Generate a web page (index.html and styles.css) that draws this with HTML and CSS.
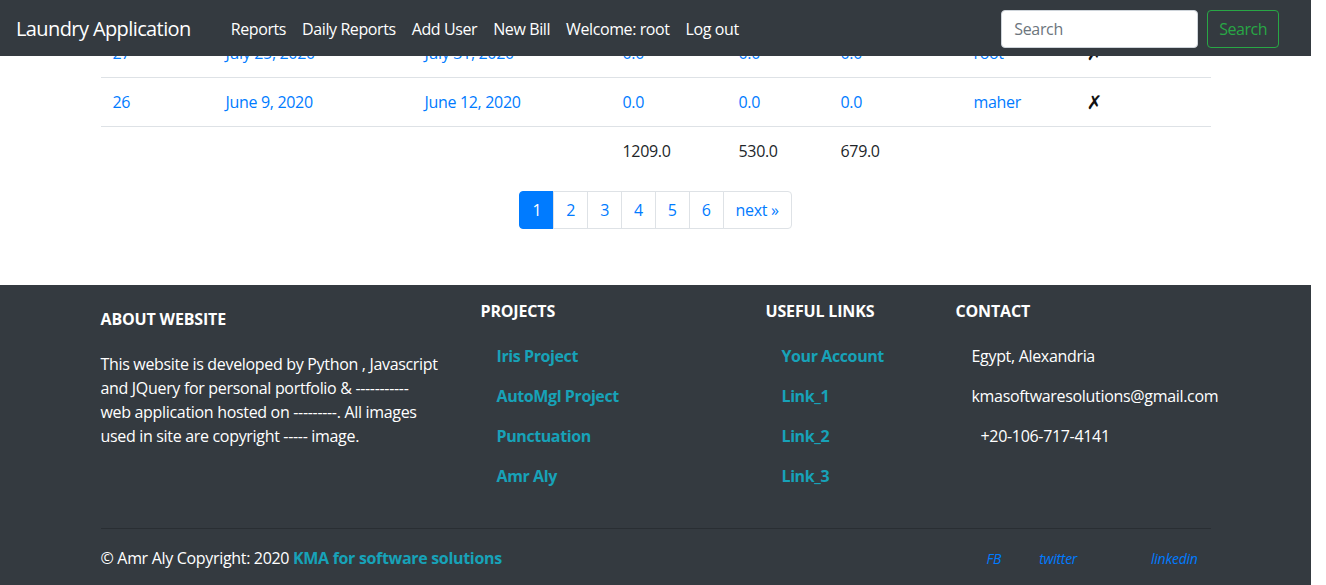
FILE: index.html
```html
<!DOCTYPE html>
<html lang="en">
<head>
<meta charset="utf-8">
<title>Laundry Application</title>
<link rel="stylesheet" href="styles.css">
</head>
<body>
<div class="page">
  <nav class="navbar">
    <a class="brand" href="#">Laundry Application</a>
    <ul class="nav-links">
      <li><a href="#">Reports</a></li>
      <li><a href="#">Daily Reports</a></li>
      <li><a href="#">Add User</a></li>
      <li><a href="#">New Bill</a></li>
      <li><a href="#">Welcome: root</a></li>
      <li><a href="#">Log out</a></li>
    </ul>
    <form class="search">
      <input type="search" placeholder="Search">
      <button type="button">Search</button>
    </form>
  </nav>

  <main class="main">
    <table class="table">
      <colgroup>
        <col class="c-id"><col class="c-from"><col class="c-to"><col class="c-total">
        <col class="c-paid"><col class="c-rest"><col class="c-user"><col class="c-del">
      </colgroup>
      <tbody>
        <tr>
          <td><a href="#">27</a></td>
          <td><a href="#">July 25, 2020</a></td>
          <td><a href="#">July 31, 2020</a></td>
          <td><a href="#">0.0</a></td>
          <td><a href="#">0.0</a></td>
          <td><a href="#">0.0</a></td>
          <td><a href="#">root</a></td>
          <td class="del">✗</td>
        </tr>
        <tr>
          <td><a href="#">26</a></td>
          <td><a href="#">June 9, 2020</a></td>
          <td><a href="#">June 12, 2020</a></td>
          <td><a href="#">0.0</a></td>
          <td><a href="#">0.0</a></td>
          <td><a href="#">0.0</a></td>
          <td><a href="#">maher</a></td>
          <td class="del">✗</td>
        </tr>
        <tr>
          <td></td><td></td><td></td>
          <td>1209.0</td>
          <td>530.0</td>
          <td>679.0</td>
          <td></td><td></td>
        </tr>
      </tbody>
    </table>

    <ul class="pagination">
      <li class="page-item active"><a class="page-link" href="#">1</a></li>
      <li class="page-item"><a class="page-link" href="#">2</a></li>
      <li class="page-item"><a class="page-link" href="#">3</a></li>
      <li class="page-item"><a class="page-link" href="#">4</a></li>
      <li class="page-item"><a class="page-link" href="#">5</a></li>
      <li class="page-item"><a class="page-link" href="#">6</a></li>
      <li class="page-item"><a class="page-link" href="#">next »</a></li>
    </ul>
  </main>

  <footer class="footer">
    <div class="footer-inner">
      <div class="footer-grid">
        <div class="about">
          <h6>About Website</h6>
          <p>This website is developed by Python , Javascript<br>and JQuery for personal portfolio &amp; -----------<br>web application hosted on ---------. All images<br>used in site are copyright ----- image.</p>
        </div>
        <div>
          <h6>Projects</h6>
          <ul class="links">
            <li><a href="#">Iris Project</a></li>
            <li><a href="#">AutoMgl Project</a></li>
            <li><a href="#">Punctuation</a></li>
            <li><a href="#">Amr Aly</a></li>
          </ul>
        </div>
        <div>
          <h6>Useful Links</h6>
          <ul class="links">
            <li><a href="#">Your Account</a></li>
            <li><a href="#">Link_1</a></li>
            <li><a href="#">Link_2</a></li>
            <li><a href="#">Link_3</a></li>
          </ul>
        </div>
        <div>
          <h6>Contact</h6>
          <ul class="links contact">
            <li>Egypt, Alexandria</li>
            <li>kmasoftwaresolutions@gmail.com</li>
            <li class="phone">+20-106-717-4141</li>
          </ul>
        </div>
      </div>
      <hr class="rule">
      <div class="bottom">
        <p class="copy">© Amr Aly Copyright: 2020 <a href="#">KMA for software solutions</a></p>
        <div class="social">
          <a class="fb" href="#">FB</a>
          <a class="tw" href="#">twitter</a>
          <a class="li" href="#">linkedin</a>
        </div>
      </div>
    </div>
  </footer>
</div>
</body>
</html>
```

FILE: styles.css
```css
html {
  overflow: hidden;
}

body {
  margin: 0;
  font-family: "Open Sans", "Noto Sans", sans-serif;
  font-size: 16px;
  line-height: 24px;
  color: #212529;
  background: #fff;
  letter-spacing: -0.02em;
}

a {
  color: #007bff;
  text-decoration: none;
}

.page {
  width: calc(100% - 15px);
}

/* Navbar (fixed on top of the scrolled content) */
.navbar {
  position: fixed;
  top: 0;
  left: 0;
  right: 15px;
  height: 56px;
  box-sizing: border-box;
  padding: 1px 32px 0 16px;
  background: #343a40;
  display: flex;
  align-items: center;
  z-index: 10;
}

.brand {
  color: #fff;
  font-size: 20px;
  line-height: 30px;
  letter-spacing: -0.03em;
  margin-right: 32px;
}

.nav-links {
  display: flex;
  flex: 1;
  list-style: none;
  margin: 0;
  padding: 0;
}

.nav-links a {
  display: block;
  padding: 8px;
  color: #fff;
  line-height: 24px;
  letter-spacing: -0.025em;
}

.search {
  display: flex;
  gap: 9px;
  margin: 0;
}

.search input {
  width: 197px;
  height: 38px;
  box-sizing: border-box;
  padding: 6px 12px;
  font: inherit;
  letter-spacing: inherit;
  color: #495057;
  background: #fff;
  border: 1px solid #ced4da;
  border-radius: 4px;
  outline: none;
}

.search input::placeholder {
  color: #6c757d;
}

.search button {
  height: 38px;
  box-sizing: border-box;
  padding: 6px 11px;
  font: inherit;
  letter-spacing: -0.03em;
  color: #28a745;
  background: transparent;
  border: 1px solid #28a745;
  border-radius: 4px;
}

/* Main */
.main {
  width: 1110px;
  margin: 0 auto;
  padding: 28px 0 56px;
}

.table {
  width: 100%;
  border-collapse: collapse;
  table-layout: fixed;
  margin-bottom: 16px;
}

.c-id { width: 113px; }
.c-from { width: 199px; }
.c-to { width: 198px; }
.c-total { width: 116px; }
.c-paid { width: 102px; }
.c-rest { width: 133px; }
.c-user { width: 113px; }
.c-del { width: 136px; }

.table td {
  padding: 12px;
  border-top: 1px solid #dee2e6;
  vertical-align: top;
  white-space: nowrap;
}

.table td.del {
  font-family: "DejaVu Sans", sans-serif;
  font-size: 19px;
  line-height: 24px;
  color: #111;
}

.pagination {
  display: flex;
  justify-content: center;
  list-style: none;
  margin: 0;
  padding: 0;
}

.page-link {
  display: block;
  padding: 8px 12px;
  line-height: 20px;
  border: 1px solid #dee2e6;
  margin-left: -1px;
  color: #007bff;
  background: #fff;
}

.page-item:first-child .page-link {
  margin-left: 0;
  border-radius: 4px 0 0 4px;
}

.page-item:last-child .page-link {
  border-radius: 0 4px 4px 0;
}

.page-item.active .page-link {
  background: #007bff;
  border-color: #007bff;
  color: #fff;
}

/* Footer */
.footer {
  background: #343a40;
  color: #fff;
  padding: 17px 0 24px;
}

.footer-inner {
  width: 1110px;
  margin: 0 auto;
}

.footer-grid {
  display: grid;
  grid-template-columns: 380px 285px 190px 1fr;
}

.footer h6 {
  margin: 0;
  font-size: 16px;
  line-height: 19px;
  font-weight: 700;
  text-transform: uppercase;
  letter-spacing: -0.01em;
}

.about h6 {
  margin-top: 8px;
}

.about p {
  margin: 23px 0 0;
  padding-right: 30px;
}

.links {
  list-style: none;
  margin: 23px 0 0;
  padding: 0 0 0 16px;
}

.links li {
  margin-bottom: 16px;
}

.links a {
  color: #17a2b8;
  font-weight: 700;
  letter-spacing: -0.025em;
}

.contact li {
  color: #fff;
}

.contact .phone {
  padding-left: 9px;
}

.rule {
  border: 0;
  border-top: 1px solid rgba(0, 0, 0, 0.2);
  margin: 24px 0 16px;
}

.bottom {
  display: flex;
  justify-content: space-between;
  align-items: center;
}

.copy {
  margin: 0;
}

.copy a {
  color: #17a2b8;
  font-weight: 700;
}

.social {
  display: flex;
  padding: 2px 13px 0 0;
  font-size: 14px;
  font-style: italic;
  letter-spacing: -0.02em;
}

.social .tw {
  margin-left: 38px;
}

.social .li {
  margin-left: 74px;
}
```
